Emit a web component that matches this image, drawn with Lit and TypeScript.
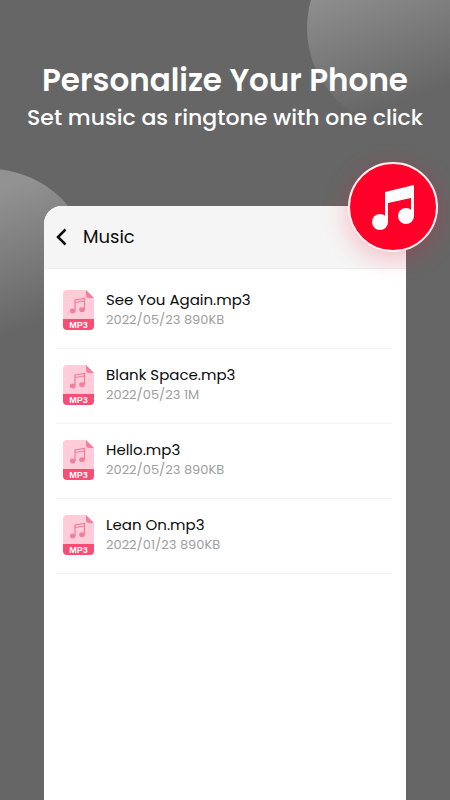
import { LitElement, html, css } from "lit";
import { customElement } from "lit/decorators.js";

interface Track {
  name: string;
  date: string;
  size: string;
}

const tracks: Track[] = [
  { name: "See You Again.mp3", date: "2022/05/23", size: "890KB" },
  { name: "Blank Space.mp3", date: "2022/05/23", size: "1M" },
  { name: "Hello.mp3", date: "2022/05/23", size: "890KB" },
  { name: "Lean On.mp3", date: "2022/01/23", size: "890KB" },
];

@customElement("file-icon")
class FileIcon extends LitElement {
  static styles = css`
    :host {
      display: block;
      flex: none;
      width: 32px;
      height: 40px;
    }
    .art {
      display: block;
    }
    .label {
      font: 700 9px "Liberation Sans", sans-serif;
      fill: #fff;
      text-anchor: middle;
    }
  `;

  render() {
    return html`<svg class="art" width="32" height="40" viewBox="0 0 32 40" aria-hidden="true">
      <path d="M4 0h19l8 8v21H0V4a4 4 0 0 1 4-4z" fill="#ffccd7" />
      <path d="M23 0l8 8h-5a3 3 0 0 1-3-3z" fill="#f27f9f" />
      <path d="M0 29h31v7a4 4 0 0 1-4 4H4a4 4 0 0 1-4-4z" fill="#f94d73" />
      <path d="M12 21V10l9.500-1.500v11M12 12.500l9.500-1.500" fill="none" stroke="#ee7d9c" stroke-width="1.200" />
      <ellipse cx="9.700" cy="21" rx="2.800" ry="2.400" fill="#f27f9f" />
      <ellipse cx="19" cy="19.700" rx="2.800" ry="2.400" fill="#f27f9f" />
      <text class="label" x="15.5" y="38">MP3</text>
    </svg>`;
  }
}

@customElement("track-row")
class TrackRow extends LitElement {
  static properties = { track: { attribute: false } };
  declare track: Track;

  static styles = css`
    :host {
      display: flex;
      align-items: center;
      gap: 11px;
      height: 72px;
      padding: 0 0 2px 7px;
      border-bottom: 1px solid #f4f4f4;
    }
    .text {
      padding-bottom: 2px;
    }
    .name {
      font-size: 15px;
      line-height: 21px;
      color: #0c0c0c;
    }
    .meta {
      font-size: 13px;
      line-height: 20px;
      color: #a0a0a0;
    }
  `;

  render() {
    return html`<file-icon></file-icon>
      <div class="text">
        <div class="name">${this.track.name}</div>
        <div class="meta">${this.track.date} ${this.track.size}</div>
      </div>`;
  }
}

@customElement("app-root")
class AppRoot extends LitElement {
  static styles = css`
    :host {
      display: flex;
      flex-direction: column;
      position: relative;
      box-sizing: border-box;
      min-height: 100vh;
      overflow: hidden;
      background: #666;
      font-family: Poppins, Inter, sans-serif;
    }
    .orb {
      position: absolute;
      width: 202px;
      height: 202px;
      border-radius: 50%;
      background: linear-gradient(160deg, #929292 22%, #666 76%);
    }
    .orb-right {
      top: -73px;
      right: -59px;
    }
    .orb-left {
      top: 169px;
      left: -111px;
    }
    .intro {
      position: relative;
      padding-top: 60px;
      height: 146px;
      box-sizing: border-box;
      text-align: center;
      white-space: nowrap;
      color: #fff;
    }
    .title {
      margin: 0;
      font-size: 31px;
      font-weight: 600;
      line-height: 40px;
    }
    .tagline {
      margin: 0;
      font-size: 22px;
      font-weight: 500;
      line-height: 36px;
    }
    .phone {
      position: relative;
      flex: 1;
      margin: 60px 44px 0;
      border-radius: 18px 18px 0 0;
      background: #fff;
    }
    .bar {
      display: flex;
      align-items: center;
      gap: 15px;
      height: 62px;
      padding-left: 12px;
      border-bottom: 1px solid #ececec;
      border-radius: 18px 18px 0 0;
      background: #f5f5f5;
    }
    .back {
      display: block;
      padding: 0;
      border: 0;
      background: none;
    }
    .back-icon {
      display: block;
    }
    .heading {
      margin: 0;
      font-size: 18px;
      font-weight: 400;
      line-height: 24px;
      color: #0c0c0c;
    }
    .list {
      padding: 5px 14px 0 12px;
    }
    .badge {
      position: absolute;
      top: -44px;
      right: -32px;
      width: 86px;
      height: 86px;
      border: 2px solid #fff0f0;
      border-radius: 50%;
      background: #ff0029;
      box-shadow: 0 6px 26px rgba(255, 0, 41, 0.25);
    }
    .badge-icon {
      display: block;
    }
  `;

  render() {
    return html`
      <div class="orb orb-right"></div>
      <div class="orb orb-left"></div>
      <header class="intro">
        <h1 class="title">Personalize Your Phone</h1>
        <p class="tagline">Set music as ringtone with one click</p>
      </header>
      <main class="phone">
        <div class="bar">
          <button class="back" aria-label="Back">
            <svg class="back-icon" width="12" height="18" viewBox="0 0 12 18">
              <path d="M9.500 1.500L2 9l7.500 7.500" fill="none" stroke="#0c0c0c" stroke-width="2.500" />
            </svg>
          </button>
          <h2 class="heading">Music</h2>
        </div>
        <div class="list">${tracks.map((t) => html`<track-row .track=${t}></track-row>`)}</div>
        <div class="badge">
          <svg class="badge-icon" width="86" height="86" viewBox="0 0 86 86" fill="#fff" aria-hidden="true">
            <path d="M35 28L64 21V52H61V34L38 39V58H35z" />
            <circle cx="30" cy="58" r="8" />
            <circle cx="56" cy="52" r="8" />
          </svg>
        </div>
      </main>
    `;
  }
}
